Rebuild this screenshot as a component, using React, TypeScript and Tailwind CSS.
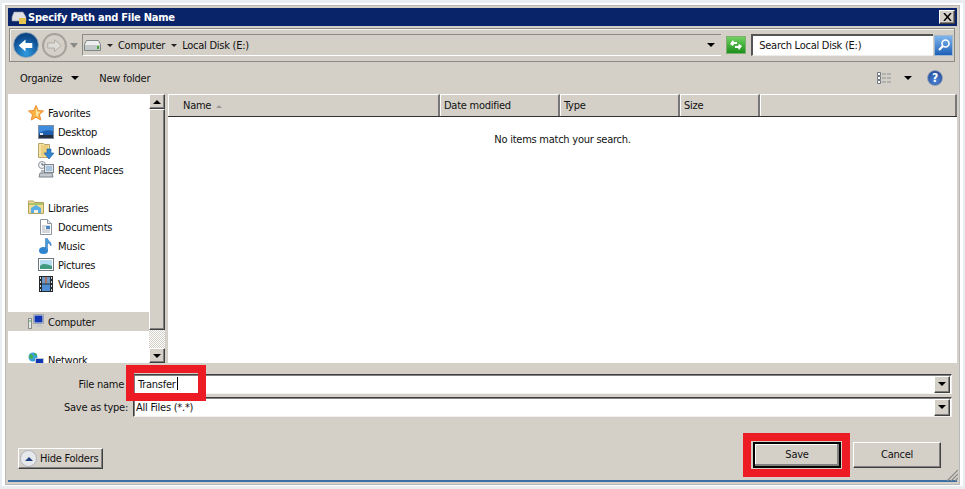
const raised = 'border border-t-white border-l-white border-r-[#404040] border-b-[#404040] shadow-[inset_-1px_-1px_0_#808080]'
const sunken = 'border border-t-[#404040] border-l-[#404040] border-r-[#f4f2ee] border-b-[#f4f2ee] shadow-[inset_1px_1px_0_#808080]'

function Star() {
  return (
    <svg width="16" height="16" viewBox="0 0 16 16">
      <path d="M8 .5l2.200 5 5.300.5-4 3.600 1.200 5.400L8 12.200 3.300 15l1.200-5.400-4-3.600 5.300-.5z" fill="#fbb445" stroke="#ee8a2c" />
      <path d="M8 3l1.400 3.600 3 .3-2.600 2 .8 3L8 10.500z" fill="#fde9a6" />
    </svg>
  )
}

function DesktopIcon() {
  return (
    <svg width="16" height="14" viewBox="0 0 16 14">
      <rect x=".5" y=".5" width="15" height="13" fill="#1f5fb0" stroke="#7f8ea3" />
      <path d="M1 1h14v5C9 4 5 6 1 8z" fill="#3f8bdc" />
      <rect x="1" y="10" width="14" height="3" fill="#25303c" />
      <rect x="2" y="8" width="3" height="2" fill="#d7e6f5" />
    </svg>
  )
}

function DownloadsIcon() {
  return (
    <svg width="16" height="17" viewBox="0 0 16 17">
      <path d="M.5 1.500h5l1 1h5v13h-11z" fill="#f4e3a4" stroke="#b8a469" />
      <path d="M3 3h7v11H3z" fill="#e9cf7f" />
      <path d="M9 7h4v4h3l-5 6-5-6h3z" fill="#2f86d3" stroke="#1b5c9c" strokeWidth=".6" />
    </svg>
  )
}

function RecentIcon() {
  return (
    <svg width="16" height="17" viewBox="0 0 16 17">
      <circle cx="4" cy="4" r="3.500" fill="#f2f3f5" stroke="#8c939b" />
      <path d="M4 2v2h2" stroke="#59616a" fill="none" />
      <rect x="6.500" y="3.500" width="9" height="8" fill="#dfe3e8" stroke="#7d848c" />
      <rect x="8" y="5" width="6" height="5" fill="#a7c4de" />
      <path d="M2 12h12l1 4H1z" fill="#c6cad0" stroke="#7d848c" />
      <path d="M3 9h3v3H3z" fill="#aeb3ba" />
    </svg>
  )
}

function LibrariesIcon() {
  return (
    <svg width="16" height="15" viewBox="0 0 16 15">
      <path d="M.5 2.500V1h5l1 1.500h9v11H.5z" fill="#f1dc94" stroke="#b3a05d" />
      <path d="M1 3h14v2H1z" fill="#a9c46a" />
      <path d="M3 8l5-3 5 3v5H3z" fill="#5aaee6" />
      <path d="M6 10h4v3H6z" fill="#f6f3e2" />
    </svg>
  )
}

function DocumentsIcon() {
  return (
    <svg width="14" height="16" viewBox="0 0 14 16">
      <path d="M1.500.5h7l4 4v11h-11z" fill="#fff" stroke="#8d949c" />
      <path d="M8.500.5v4h4" fill="#dfe3e8" stroke="#8d949c" />
      <path d="M3 7h8M3 9h3M3 11h8M3 13h8" stroke="#a6acb4" />
      <rect x="7" y="7" width="4" height="3" fill="#4c86c4" />
    </svg>
  )
}

function MusicIcon() {
  return (
    <svg width="14" height="16" viewBox="0 0 14 16">
      <ellipse cx="4.500" cy="12.500" rx="4.500" ry="3.500" fill="#2f84cf" />
      <path d="M6.500 12.500V.5h2c.5 2.500 4.500 3.500 3.500 7.500-.7-2-2.500-3-3.500-3v7.500z" fill="#4a9bdc" stroke="#2a6cae" strokeWidth=".5" />
    </svg>
  )
}

function PicturesIcon() {
  return (
    <svg width="16" height="13" viewBox="0 0 16 13">
      <rect x=".5" y=".5" width="15" height="12" fill="#fff" stroke="#6f7780" />
      <rect x="2" y="2" width="12" height="9" fill="#b5dcf0" />
      <path d="M2 8c3-3 6-2 12 0v3H2z" fill="#3f9a7f" />
    </svg>
  )
}

function VideosIcon() {
  return (
    <svg width="14" height="16" viewBox="0 0 14 16">
      <rect width="14" height="16" fill="#23282d" />
      <rect x="3" y="1" width="8" height="6.500" fill="#6d9bc9" />
      <rect x="3" y="8.500" width="8" height="6.500" fill="#4f8fd3" />
      <path d="M1 1h1v2H1zM1 5h1v2H1zM1 9h1v2H1zM1 13h1v2H1zM12 1h1v2h-1zM12 5h1v2h-1zM12 9h1v2h-1zM12 13h1v2h-1z" fill="#d7dadd" />
      <path d="M6 1h2v6H6z" fill="#b0705a" />
    </svg>
  )
}

function ComputerIcon() {
  return (
    <svg width="16" height="15" viewBox="0 0 16 15">
      <rect x=".5" y="4.500" width="3" height="10" fill="#e8ebe6" stroke="#878c8f" />
      <rect x="1.500" y="6" width="1" height="2" fill="#46b04a" />
      <rect x="5.500" y=".5" width="10" height="9" fill="#e6e8ea" stroke="#a0a6ac" />
      <rect x="6.500" y="1.500" width="8" height="7" fill="#1136b4" />
      <path d="M9 10h4v2h2v1H7v-1h2z" fill="#c4c8cc" />
    </svg>
  )
}

function NetworkIcon() {
  return (
    <svg width="16" height="15" viewBox="0 0 16 15">
      <circle cx="5" cy="5" r="4.500" fill="#3aa0dc" />
      <path d="M2 2c2 0 3 1 3 3S3 7 1 6zM6 1c2 0 3 1 3 2L7 4z" fill="#45b04c" />
      <rect x="7.500" y="6.500" width="8" height="8" fill="#1136b4" stroke="#c2c6ca" />
    </svg>
  )
}

function DriveIcon() {
  return (
    <svg width="17" height="11" viewBox="0 0 17 11">
      <path d="M2.500.5h12l2 4v6H.5v-6z" fill="#eceeee" stroke="#7f8686" />
      <path d="M1 5h15v5H1z" fill="#c2c8c8" />
      <rect x="13" y="6" width="2" height="3" fill="#43a63a" />
    </svg>
  )
}

function Arrow({ left }: { left?: boolean }) {
  return (
    <svg width="17" height="17" viewBox="0 0 20 20">
      <path
        d={left ? 'M2 10l8-7v4h8v6h-8v4z' : 'M18 10l-8-7v4H2v6h8v4z'}
        fill={left ? '#fff' : '#dedcd6'}
        stroke={left ? 'none' : '#a9a7a1'}
      />
    </svg>
  )
}

function Down({ cls = '' }: { cls?: string }) {
  return <div className={`w-0 h-0 border-x-[4px] border-x-transparent border-t-[4px] border-t-black ${cls}`} />
}

function SmallRight() {
  return <div className="w-0 h-0 border-x-[3.5px] border-x-transparent border-t-[3.5px] border-t-[#222]" />
}

function ComboButton() {
  return (
    <div className={`w-[16px] h-[17px] bg-[#d4d0c8] flex items-center justify-center shrink-0 ${raised}`}>
      <Down />
    </div>
  )
}

type Item = { label: string; icon?: React.ReactNode; top?: boolean; active?: boolean }

const items: Item[] = [
  { label: 'Favorites', icon: <Star />, top: true },
  { label: 'Desktop', icon: <DesktopIcon /> },
  { label: 'Downloads', icon: <DownloadsIcon /> },
  { label: 'Recent Places', icon: <RecentIcon /> },
  { label: '' },
  { label: 'Libraries', icon: <LibrariesIcon />, top: true },
  { label: 'Documents', icon: <DocumentsIcon /> },
  { label: 'Music', icon: <MusicIcon /> },
  { label: 'Pictures', icon: <PicturesIcon /> },
  { label: 'Videos', icon: <VideosIcon /> },
  { label: '' },
  { label: 'Computer', icon: <ComputerIcon />, top: true, active: true },
  { label: '' },
  { label: 'Network', icon: <NetworkIcon />, top: true },
]

const columns = [
  { label: 'Name', width: 'w-[272px]', pad: 'pl-[14px]', sort: true },
  { label: 'Date modified', width: 'w-[120px]', pad: 'pl-[3px]' },
  { label: 'Type', width: 'w-[120px]', pad: 'pl-[3px]' },
  { label: 'Size', width: 'w-[80px]', pad: 'pl-[3px]' },
  { label: '', width: 'flex-1', pad: '' },
]

export default function App() {
  return (
    <div className="relative w-[965px] h-[489px] overflow-hidden bg-[#e9edf1] pt-[3px] px-[2px] text-[11px] tracking-[-0.25px] text-[#111] font-['DejaVu_Sans_Condensed','DejaVu_Sans',sans-serif]">
      <div className="h-[483px] bg-white pt-[2px] pl-[3px] pr-[3px]">
        <div className="h-[480px] border border-[#b8b8b8] bg-[#d4d0c8] pt-[2px] pl-[2px] pr-[2px] pb-[1px]">
          <div className="flex h-[474px] flex-col border-b-[2px] border-b-[#3b6ea5]">
            {/* title */}
            <div className="flex h-[18px] shrink-0 items-center bg-[#0a246a] pl-[3px] pr-[2px]">
              <svg width="16" height="15" viewBox="0 0 16 15">
                <path d="M3 2h9l3 5v4H1V7z" fill="#dfe1e4" stroke="#8f959b" strokeWidth=".6" />
                <rect x="8" y="8" width="7" height="6" fill="#e7c44f" />
              </svg>
              <span className="ml-[1px] pt-[2px] font-bold text-white">Specify Path and File Name</span>
              <div className={`ml-auto flex h-[14px] w-[16px] items-center justify-center bg-[#d4d0c8] ${raised}`}>
                <svg width="9" height="8" viewBox="0 0 9 8">
                  <path d="M1 0l7 8M8 0L1 8" stroke="#000" strokeWidth="1.500" />
                </svg>
              </div>
            </div>

            {/* nav row */}
            <div className="mt-[2px] ml-[1px] mr-[2px] flex h-[34px] shrink-0 items-center border border-[#8a8a86] shadow-[inset_1px_1px_0_#f4f2ee] pl-[3px] pr-[1px]">
              <div className="flex h-[26px] w-[26px] items-center justify-center rounded-full border border-[#8fa5b8] bg-[radial-gradient(circle_at_50%_85%,#2f9be0,#0f4f93_65%,#0a3a72)]">
                <Arrow left />
              </div>
              <div className="ml-[3px] flex h-[25px] w-[25px] items-center justify-center rounded-full border-[2px] border-[#a5a29c] bg-[#d4d0c8]">
                <Arrow />
              </div>
              <div className="ml-[3px] h-0 w-0 border-x-[4px] border-x-[#d4d0c8] border-t-[5px] border-t-[#8a8a86]" />
              <div className="ml-[4px] flex h-[22px] w-[640px] items-center border-t border-t-[#8a8a86] border-l border-l-[#8a8a86] border-b border-b-white pl-[1px]">
                <DriveIcon />
                <div className="ml-[6px]"><SmallRight /></div>
                <span className="ml-[5px] pt-[2px]">Computer</span>
                <div className="ml-[6px]"><SmallRight /></div>
                <span className="ml-[5px] pt-[2px]">Local Disk (E:)</span>
                <Down cls="ml-auto mr-[6px]" />
              </div>
              <div className="ml-[5px] flex h-[18px] w-[20px] items-center justify-center border border-[#7fae72] bg-[linear-gradient(#6fd160,#1d8f1c)]">
                <svg width="14" height="12" viewBox="0 0 14 12">
                  <path d="M1 5l3-4 1 2h3v2H5l-1 2zM13 7l-3 4-1-2H6V7h3l1-2z" fill="#fff" />
                </svg>
              </div>
              <div className="ml-[5px] flex h-[22px] w-[182px] items-center border-t-[2px] border-t-[#555] border-l-[2px] border-l-[#555] border-b border-b-[#eeece8] bg-white pl-[6px] pt-[2px]">
                Search Local Disk (E:)
              </div>
              <div className="ml-[1px] flex h-[21px] w-[19px] items-center justify-center border border-[#9fb7cf] bg-[linear-gradient(#7fb6ee,#1d5fb8)]">
                <svg width="14" height="14" viewBox="0 0 14 14">
                  <circle cx="8.500" cy="5.500" r="3.500" fill="none" stroke="#fff" strokeWidth="1.600" />
                  <path d="M6 8l-4 4" stroke="#fff" strokeWidth="2.200" />
                </svg>
              </div>
            </div>

            {/* command bar */}
            <div className="flex h-[32px] shrink-0 items-center pl-[12px] pr-[14px]">
              <span className="pt-[2px]">Organize</span>
              <Down cls="ml-[9px]" />
              <span className="ml-[20px] pt-[2px]">New folder</span>
              <svg className="ml-auto" width="15" height="12" viewBox="0 0 15 12">
                <path d="M.5.500h3v3h-3zM.5 4.500h3v3h-3zM.5 8.500h3v3h-3z" fill="#fff" stroke="#6f7780" />
                <path d="M5 2h4M10 2h4M5 6h4M10 6h4M5 10h4M10 10h4" stroke="#8b9199" />
              </svg>
              <Down cls="ml-[12px]" />
              <div className="ml-[15px] flex h-[16px] w-[16px] items-center justify-center rounded-full border border-[#8e9fb7] bg-[radial-gradient(circle_at_50%_70%,#4f86d6,#1d3f8f)] text-[12px] font-bold leading-none text-white">
                ?
              </div>
            </div>

            {/* panes */}
            <div className="flex h-[269px] shrink-0">
              <div className="w-[141px] shrink-0 overflow-hidden bg-white pt-[9px]">
                {items.map((item, i) => (
                  <div
                    key={i}
                    className={`flex h-[19px] items-center ${item.active ? 'bg-[#d4d0c8]' : ''}`}
                  >
                    {item.icon && (
                      <div className={`flex w-[17px] justify-center ${item.top ? 'ml-[19px] mr-[4px]' : 'ml-[29px] mr-[4px]'}`}>
                        {item.icon}
                      </div>
                    )}
                    <span className="pt-[3px]">{item.label}</span>
                  </div>
                ))}
              </div>

              <div className="flex w-[16px] shrink-0 flex-col bg-[repeating-conic-gradient(#d4d0c8_0_25%,#fff_0_50%)] bg-[length:2px_2px]">
                <div className={`flex h-[15px] shrink-0 items-center justify-center bg-[#d4d0c8] ${raised}`}>
                  <Down cls="rotate-180" />
                </div>
                <div className={`h-[221px] shrink-0 bg-[#d4d0c8] ${raised}`} />
                <div className="flex-1" />
                <div className={`flex h-[15px] shrink-0 items-center justify-center bg-[#d4d0c8] ${raised}`}>
                  <Down />
                </div>
              </div>

              <div className="ml-[3px] flex-1 bg-white">
                <div className="flex h-[23px] border-b border-b-[#303030] bg-[#d4d0c8]">
                  {columns.map((c) => (
                    <div
                      key={c.label || 'rest'}
                      className={`flex h-[22px] items-center border-t border-l border-t-white border-l-white border-r-[2px] border-r-[#777] pt-[2px] ${c.width} ${c.pad}`}
                    >
                      {c.label}
                      {c.sort && (
                        <div className="ml-[5px] h-0 w-0 border-x-[3px] border-x-transparent border-b-[3px] border-b-[#9a9a96]" />
                      )}
                    </div>
                  ))}
                </div>
                <div className="pt-[15px] text-center">No items match your search.</div>
              </div>
            </div>

            {/* file name + type */}
            <div className="flex-1 pr-[5px]">
              <div className="mt-[11px] flex items-center">
                <div className="w-[118px] pr-[2px] pt-[2px] text-right">File name</div>
                <div className={`ml-[7px] flex h-[20px] flex-1 items-center justify-between bg-white pl-[4px] pr-[1px] ${sunken}`}>
                  <span className="pt-[2px]">
                    Transfer<span className="ml-[1px] inline-block h-[13px] w-px bg-black align-[-2px]" />
                  </span>
                  <ComboButton />
                </div>
              </div>
              <div className="mt-[3px] flex items-center">
                <div className="w-[120px] pt-[2px] text-right">Save as type:</div>
                <div className={`ml-[5px] flex h-[20px] flex-1 items-center justify-between bg-white pl-[2px] pr-[1px] ${sunken}`}>
                  <span className="pt-[2px]">All Files (*.*)</span>
                  <ComboButton />
                </div>
              </div>
              <div className="mt-[25px] flex items-start pl-[10px] pr-[11px]">
                <div className={`mt-[6px] flex h-[21px] w-[85px] items-center whitespace-nowrap bg-[#d4d0c8] pl-[1px] ${raised}`}>
                  <div className="flex h-[17px] w-[17px] items-center justify-center rounded-full border border-[#aeb4bc] bg-[#e6e8ec]">
                    <div className="h-0 w-0 border-x-[4px] border-x-transparent border-b-[4px] border-b-[#1f3f80]" />
                  </div>
                  <span className="ml-[3px] pt-[2px]">Hide Folders</span>
                </div>
                <div className="ml-auto flex h-[26px] w-[88px] items-center justify-center border-[2px] border-black bg-[#d4d0c8] pt-[1px] shadow-[inset_-2px_-2px_0_#808080,inset_1px_1px_0_#fff]">
                  Save
                </div>
                <div className={`ml-[12px] flex h-[26px] w-[88px] items-center justify-center bg-[#d4d0c8] pt-[1px] ${raised}`}>
                  Cancel
                </div>
              </div>
            </div>
          </div>
        </div>
      </div>

      {/* red callouts drawn over the screenshot */}
      <div className="absolute left-[126px] top-[365px] h-[36px] w-[80px] border-[8px] border-[#ed1c24]" />
      <div className="absolute left-[743px] top-[433px] h-[44px] w-[107px] border-[8px] border-[#ed1c24]" />
      <svg className="absolute left-[946px] top-[469px]" width="12" height="12" viewBox="0 0 12 12">
        <path d="M1 12L12 1M5 12l7-7M9 12l3-3" stroke="#8a8a86" strokeWidth="1.200" />
      </svg>
    </div>
  )
}
